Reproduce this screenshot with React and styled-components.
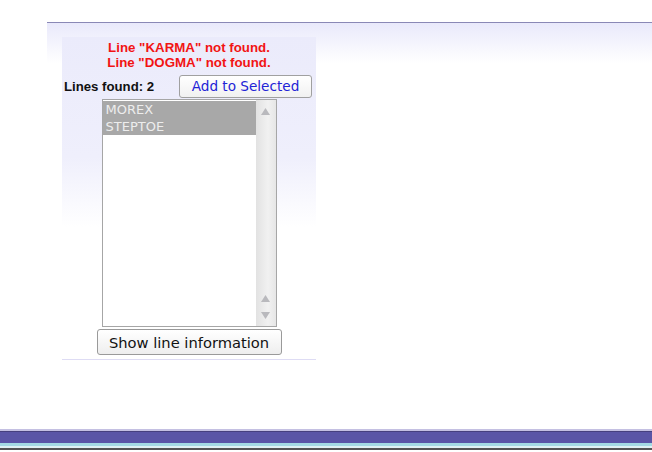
import React from 'react';
import styled, { createGlobalStyle } from "styled-components";

const GlobalStyle = createGlobalStyle`
    html, body {
        margin: 0;
        padding: 0;
        background: #ffffff;
        font-family: "Liberation Sans", Arial, sans-serif;
    }
`;

const missing = ["KARMA", "DOGMA"];
const lines = ["MOREX", "STEPTOE"];

function Arrow({ down }) {
    return (
        <svg width="9" height="7" viewBox="0 0 9 7">
            <polygon points={down ? "0,0 9,0 4.5,7" : "0,7 9,7 4.5,0"} fill="#b9b9bd" />
        </svg>
    );
}

function App() {
    return (
        <>
            <GlobalStyle />
            <Page>
                <Content>
                    <Panel>
                        <Messages>
                            {missing.map((name) => (
                                <Message key={name}>Line "{name}" not found.</Message>
                            ))}
                        </Messages>
                        <FoundRow>
                            <FoundLabel>Lines found: {lines.length}</FoundLabel>
                            <AddButton>Add to Selected</AddButton>
                        </FoundRow>
                        <ListBox>
                            <Items>
                                {lines.map((line) => (
                                    <Item key={line}>{line}</Item>
                                ))}
                            </Items>
                            <ScrollBar>
                                <Arrow />
                                <ScrollBottom>
                                    <Arrow />
                                    <Arrow down />
                                </ScrollBottom>
                            </ScrollBar>
                        </ListBox>
                        <ShowButton>Show line information</ShowButton>
                    </Panel>
                </Content>
                <Footer />
            </Page>
        </>
    );
}

const Page = styled.div`
    width: 652px;
    height: 452px;
    padding-top: 22px;
    box-sizing: border-box;
    display: flex;
    flex-direction: column;
`;

const Content = styled.div`
    margin-left: 47px;
    border-top: 1px solid #8a88b6;
    background: linear-gradient(#e9e9fb, #ffffff 40px);
    padding: 14px 0 0 15px;
    height: 392px;
    box-sizing: border-box;
`;

const Panel = styled.div`
    width: 254px;
    background: linear-gradient(#ebebfb 0px, #efeffc 120px, #ffffff 190px);
    border-bottom: 1px solid #dedcf4;
    display: flex;
    flex-direction: column;
    align-items: center;
    padding-top: 3px;
    padding-bottom: 4px;
`;

const Messages = styled.div`
    display: flex;
    flex-direction: column;
    align-items: center;
`;

const Message = styled.div`
    color: #f21414;
    font-weight: bold;
    font-size: 13.3px;
    line-height: 15px;
`;

const FoundRow = styled.div`
    align-self: stretch;
    display: flex;
    justify-content: space-between;
    align-items: center;
    padding: 4px 4px 0 2px;
    height: 24px;
`;

const FoundLabel = styled.span`
    font-size: 13.2px;
    font-weight: bold;
    color: #111111;
`;

const AddButton = styled.button`
    width: 133px;
    height: 23px;
    font-family: "DejaVu Sans", sans-serif;
    font-size: 13.6px;
    color: #2222d6;
    background: linear-gradient(#ffffff, #f1f1f1);
    border: 1px solid #a0a0a0;
    border-radius: 3px;
    padding: 0;
`;

const ListBox = styled.div`
    width: 175px;
    height: 228px;
    margin-top: 1px;
    box-sizing: border-box;
    border: 1px solid #a6a6a6;
    background: #ffffff;
    display: flex;
`;

const Items = styled.div`
    flex: 1;
    display: flex;
    flex-direction: column;
    padding-top: 1px;
`;

const Item = styled.div`
    background: #a8a8a8;
    color: #ededed;
    font-family: "DejaVu Sans", sans-serif;
    font-size: 13px;
    line-height: 17px;
    padding-left: 3px;
`;

const ScrollBar = styled.div`
    width: 20px;
    background: linear-gradient(90deg, #e2e2e2, #f1f1f1 60%, #e6e6e6);
    display: flex;
    flex-direction: column;
    justify-content: space-between;
    align-items: center;
    padding: 8px 0 7px;
`;

const ScrollBottom = styled.div`
    display: flex;
    flex-direction: column;
    gap: 10px;
`;

const ShowButton = styled.button`
    margin-top: 2px;
    width: 185px;
    height: 26px;
    font-family: "DejaVu Sans", sans-serif;
    font-size: 14.7px;
    color: #111111;
    background: linear-gradient(#ffffff, #eeeeee);
    border: 1px solid #9a9a9a;
    border-radius: 3px;
    padding: 0;
`;

const Footer = styled.div`
    margin-top: 15px;
    height: 22px;
    box-sizing: border-box;
    border-top: 2px solid #c4c0e2;
    background: linear-gradient(
        #46407e 0px, #46407e 1px,
        #5a55a6 1px, #5a55a6 12px,
        #a4dbe4 12px, #a4dbe4 15px,
        #e0f2f4 15px, #e0f2f4 17px,
        #555555 17px, #555555 19px,
        #ffffff 19px
    );
`;

export default App;
